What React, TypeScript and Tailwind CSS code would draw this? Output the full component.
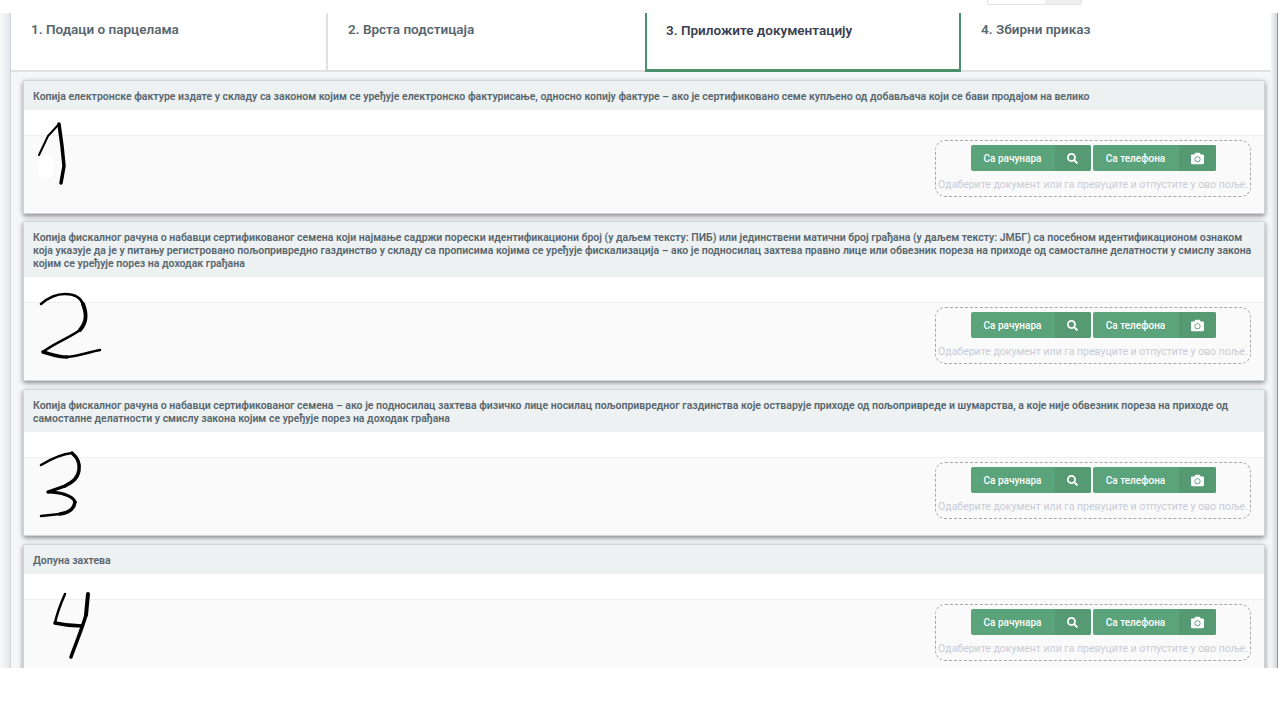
import React from 'react';
import { FaSearch, FaCamera } from 'react-icons/fa';

const sans = { fontFamily: 'Roboto, "Noto Sans", sans-serif' };

const tabs = ['1. Подаци о парцелама', '2. Врста подстицаја', '3. Приложите документацију', '4. Збирни приказ'];

const UploadButton: React.FC<{ label: string; icon: React.ReactNode; textWidth: string; iconWidth: string }> = ({ label, icon, textWidth, iconWidth }) => (
  <div className="flex h-[26px] overflow-hidden rounded-[2px] bg-[#5ba37a] text-[10px] font-medium text-white">
    <span className={`flex items-center justify-center pt-px whitespace-nowrap ${textWidth}`}>{label}</span>
    <span className={`flex items-center justify-center bg-[#559a72] ${iconWidth}`}>{icon}</span>
  </div>
);

const DocCard: React.FC<{ title: string; children?: React.ReactNode }> = ({ title, children }) => (
  <div className="relative shrink-0 overflow-hidden rounded-[2px] border border-[#d3d6d8] bg-white shadow-[0_2px_5px_rgba(0,0,0,0.45)] first:-mb-px">
    <div className="bg-[#edf1f2] px-[9px] pt-[9px] pb-[7px] text-[10.5px] leading-[13px] font-semibold text-[#58666e]">{title}</div>
    <div className="h-[26px] border-b border-[#eeeeee] bg-white" />
    <div className="flex justify-end bg-[#fafafa] pt-[4px] pr-[13px] pb-[16px]">
      <div className="flex h-[57px] w-[316px] flex-col items-center rounded-[10px] border border-dashed border-[#a8a8a8] pt-1">
        <div className="flex gap-[2px]">
          <UploadButton label="Са рачунара" icon={<FaSearch size={11} />} textWidth="w-[84px]" iconWidth="w-[36px]" />
          <UploadButton label="Са телефона" icon={<FaCamera size={13} />} textWidth="w-[86px]" iconWidth="w-[37px]" />
        </div>
        <div className="mt-[7px] text-[10.5px] leading-[14px] whitespace-nowrap text-[#c8ccd9]">Одаберите документ или га превуците и отпустите у ово поље.</div>
      </div>
    </div>
    {children}
  </div>
);

// hand-drawn marks scribbled over the screenshot
const Scribble: React.FC<{ className: string; w: number; h: number; strokes: [string, number][] }> = ({ className, w, h, strokes }) => (
  <svg className={`absolute ${className}`} width={w} height={h} viewBox={`0 0 ${w} ${h}`} fill="none">
    {strokes.map(([d, width]) => (
      <path key={d} d={d} stroke="#000" strokeWidth={width} strokeLinecap="round" strokeLinejoin="round" />
    ))}
  </svg>
);

export default function App() {
  return (
    <div className="h-[702px] w-[1280px] overflow-hidden bg-white" style={sans}>
      <div className="flex h-[13px] justify-end pr-[198px]">
        <div className="flex h-[5px] w-[95px] overflow-hidden rounded-b-[2px] border border-t-0 border-[#e4e4e4]">
          <div className="w-[57px] bg-white" />
          <div className="flex-1 bg-[#eeeeee]" />
        </div>
      </div>
      <div className="flex h-[655px]">
        <div className="w-[10px] shrink-0 bg-gradient-to-r from-[#f8f9fb] to-[#e4e6ea]" />
        <div className="flex min-w-0 flex-1 flex-col overflow-hidden border-l border-[#d4d6d9] bg-[#f5f6f8]">
          <div className="grid h-[59px] shrink-0 grid-cols-[317px_317px_316px_1fr] border-b-2 border-[#dfe1e3] bg-white text-[13.5px] font-semibold text-[#58666e]">
            {tabs.map((t, i) =>
              i === 2 ? (
                <div key={t} className="-mb-[2px] border-x-2 border-b-[3px] border-[#4b8f6b] pt-[7px] pl-[19px] text-[#3a3f51]">{t}</div>
              ) : (
                <div key={t} className={`px-5 pt-[6px] ${i === 0 ? 'border-r-2 border-[#dfe1e3]' : ''}`}>{t}</div>
              ),
            )}
          </div>
          <div className="flex flex-col gap-2 pt-2 pr-[6px] pl-3">
            <DocCard title="Копија електронске фактуре издате у складу са законом којим се уређује електронско фактурисање, односно копију фактуре – ако је сертификовано семе купљено од добављача који се бави продајом на велико">
              <div className="absolute top-[74px] left-[14px] h-[24px] w-[16px] rounded-full bg-white blur-[1px]" />
              <Scribble
                className="top-[41px] left-[12px]"
                w={34}
                h={66}
                strokes={[
                  ['M3 33 L12 14 L23 2', 2],
                  ['M23 2 L26 24 L28 44 L25 61', 3.5],
                ]}
              />
            </DocCard>
            <DocCard title="Копија фискалног рачуна о набавци сертификованог семена који најмање садржи порески идентификациони број (у даљем тексту: ПИБ) или јединствени матични број грађана (у даљем тексту: ЈМБГ) са посебном идентификационом ознаком која указује да је у питању регистровано пољопривредно газдинство у складу са прописима којима се уређује фискализација – ако је подносилац захтева правно лице или обвезник пореза на приходе од самосталне делатности у смислу закона којим се уређује порез на доходак грађана">
              <Scribble
                className="top-[66px] left-[13px]"
                w={70}
                h={74}
                strokes={[
                  ['M4 16 C12 9 20 6 28 6 C36 6 43 8 46 16', 2.5],
                  ['M46 16 C50 26 50 34 43 42', 4],
                  ['M43 42 C32 50 16 56 6 64', 2.5],
                  ['M6 64 C14 66 20 69 30 69', 3.5],
                  ['M30 69 C42 68 52 64 63 62', 2.5],
                ]}
              />
            </DocCard>
            <DocCard title="Копија фискалног рачуна о набавци сертификованог семена – ако је подносилац захтева физичко лице носилац пољопривредног газдинства које остварује приходе од пољопривреде и шумарства, а које није обвезник пореза на приходе од самосталне делатности у смислу закона којим се уређује порез на доходак грађана">
              <Scribble
                className="top-[60px] left-[13px]"
                w={50}
                h={70}
                strokes={[
                  ['M4 15 C14 9 24 4 35 3', 2.5],
                  ['M35 3 C41 8 43 14 42 20 C41 28 36 32 28 36', 3.5],
                  ['M28 36 L11 42', 3],
                  ['M11 42 C24 42 36 46 38 52', 3],
                  ['M38 52 C37 60 30 63 23 64', 3.5],
                  ['M23 64 L4 66', 2.5],
                ]}
              />
            </DocCard>
            <DocCard title="Допуна захтева">
              <Scribble
                className="top-[46px] left-[28px]"
                w={42}
                h={70}
                strokes={[
                  ['M13 3 C9 12 5 22 3 32', 2.5],
                  ['M3 32 C12 34 22 35 30 35', 3.5],
                  ['M36 3 L34 24', 4],
                  ['M34 24 C30 38 24 52 19 66', 3.5],
                ]}
              />
            </DocCard>
          </div>
        </div>
        <div className="w-[6px] shrink-0 bg-gradient-to-r from-[#f5f6f8] to-[#d4d6dc]" />
        <div className="w-[1px] shrink-0 bg-[#8f9296]" />
        <div className="w-[2px] shrink-0 bg-white" />
      </div>
    </div>
  );
}
